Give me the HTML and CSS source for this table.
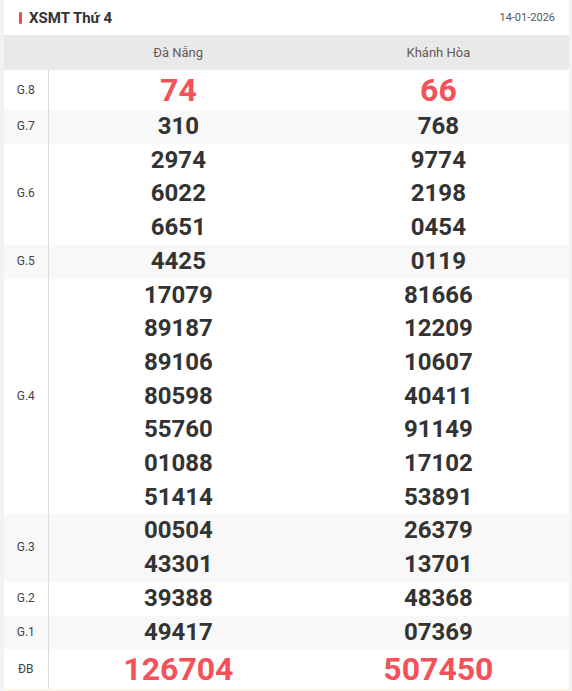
FILE: index.html
```html
<!DOCTYPE html>
<html lang="vi">
<head>
<meta charset="utf-8">
<link rel="stylesheet" href="styles.css">
</head>
<body>
<div class="card">
  <div class="head">
    <div class="title"><span class="mark"></span>XSMT Thứ 4</div>
    <div class="date">14-01-2026</div>
  </div>
  <table class="kq">
    <thead>
      <tr class="cols"><th class="lbl"></th><th>Đà Nẵng</th><th>Khánh Hòa</th></tr>
    </thead>
    <tbody>
      <tr class="big"><td class="lbl">G.8</td><td class="red">74</td><td class="red">66</td></tr>
      <tr class="alt"><td class="lbl">G.7</td><td>310</td><td>768</td></tr>
      <tr><td class="lbl">G.6</td><td><div>2974</div><div>6022</div><div>6651</div></td><td><div>9774</div><div>2198</div><div>0454</div></td></tr>
      <tr class="alt"><td class="lbl">G.5</td><td>4425</td><td>0119</td></tr>
      <tr><td class="lbl">G.4</td><td><div>17079</div><div>89187</div><div>89106</div><div>80598</div><div>55760</div><div>01088</div><div>51414</div></td><td><div>81666</div><div>12209</div><div>10607</div><div>40411</div><div>91149</div><div>17102</div><div>53891</div></td></tr>
      <tr class="alt"><td class="lbl">G.3</td><td><div>00504</div><div>43301</div></td><td><div>26379</div><div>13701</div></td></tr>
      <tr><td class="lbl">G.2</td><td>39388</td><td>48368</td></tr>
      <tr class="alt"><td class="lbl">G.1</td><td>49417</td><td>07369</td></tr>
      <tr class="big"><td class="lbl">ĐB</td><td class="red">126704</td><td class="red">507450</td></tr>
    </tbody>
  </table>
  <div class="foot"></div>
</div>
</body>
</html>
```
FILE: styles.css
```css
html, body {
  margin: 0;
  padding: 0;
  background: #f2f2f2;
  font-family: Roboto, "Liberation Sans", Arial, sans-serif;
}
.card {
  margin-left: 4px;
  width: 565px;
  background: #fff;
}
.head {
  height: 35px;
  display: flex;
  align-items: center;
  justify-content: space-between;
  padding: 0 14px 0 15px;
}
.title {
  display: flex;
  align-items: center;
  font-size: 15px;
  font-weight: 700;
  color: #333;
}
.mark {
  display: inline-block;
  width: 3px;
  height: 12px;
  background: #f04b53;
  margin-right: 7px;
  border-radius: 1px;
}
.date {
  font-size: 11px;
  color: #555;
}
.kq {
  width: 100%;
  border-collapse: collapse;
  table-layout: fixed;
}
.kq .cols {
  background: #e9e9e9;
  height: 35px;
}
.kq .cols th {
  font-weight: 400;
  font-size: 13px;
  color: #6a5757;
  padding: 0;
}
.kq th.lbl, .kq td.lbl {
  width: 44px;
}
.kq td {
  padding: 0;
  text-align: center;
  font-size: 24px;
  font-weight: 700;
  color: #333;
  line-height: 33.7px;
}
.kq td.lbl {
  font-size: 12px;
  font-weight: 400;
  color: #444;
  border-right: 1px solid #dcdcdc;
}
.kq tr.alt {
  background: #f8f8f8;
}
.kq tr.big td {
  height: 40px;
  line-height: 40px;
}
.kq td.red {
  color: #f5515a;
  font-size: 32px;
}
.foot {
  height: 2px;
  background: #fbf3e4;
}
```
